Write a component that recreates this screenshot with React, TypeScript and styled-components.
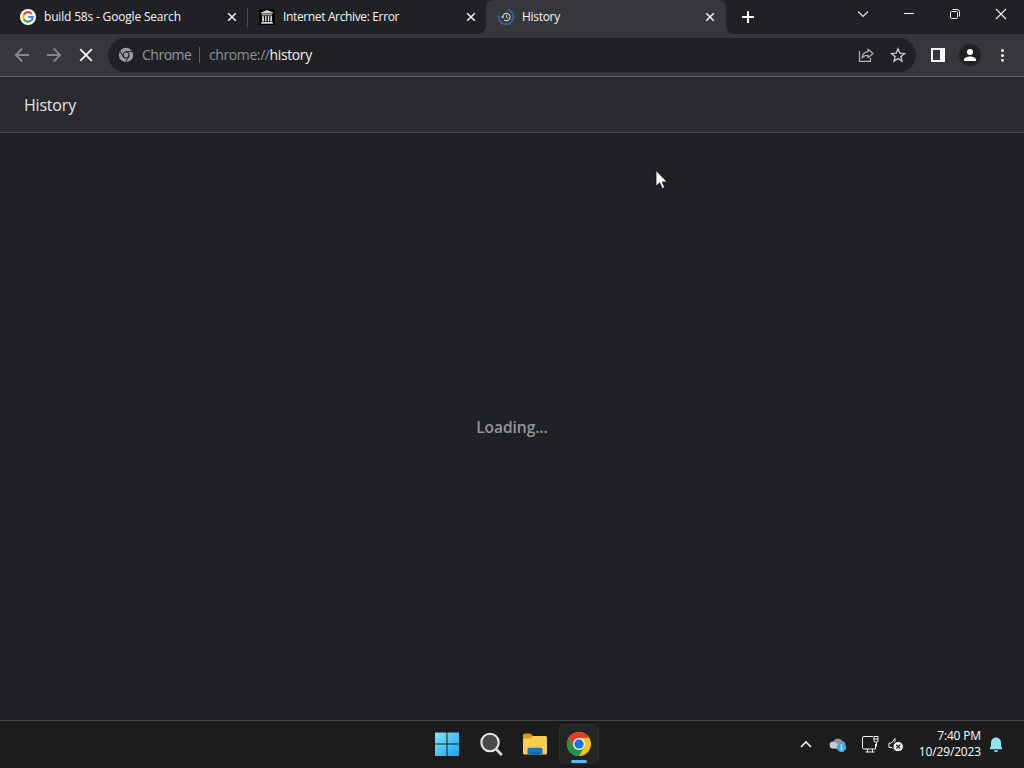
import React from "react";
import styled, { createGlobalStyle } from "styled-components";

const GlobalStyle = createGlobalStyle`
  * {
    box-sizing: border-box;
  }

  body {
    margin: 0;
    overflow: hidden;
    background: #202124;
    font-family: 'Open Sans', 'Noto Sans', sans-serif;
  }

  svg {
    display: block;
    flex: none;
  }
`;

const Screen = styled.div`
  position: relative;
  width: 1024px;
  height: 768px;
  display: flex;
  flex-direction: column;
  background: #202124;
  color: #ffffff;
`;

// Tab strip
const TabStrip = styled.div`
  height: 34px;
  display: flex;
  background: #202124;
`;

const Tab = styled.div<{ $width: number; $pad: number; $active?: boolean }>`
  width: ${(props) => props.$width}px;
  height: 34px;
  display: flex;
  align-items: center;
  padding: 0 ${(props) => (props.$active ? 11 : 10)}px 0 ${(props) => props.$pad}px;
  border-radius: 8px 8px 0 0;
  background: ${(props) => (props.$active ? "#36373a" : "transparent")};
`;

const TabTitle = styled.span<{ $spacing: number }>`
  flex: 1;
  margin-left: 8px;
  font-size: 12px;
  line-height: 16px;
  letter-spacing: ${(props) => props.$spacing}px;
  white-space: nowrap;
  color: #f4f5f6;
`;

const TabDivider = styled.div`
  width: 1px;
  height: 19px;
  margin-top: 8px;
  background: #4b4d51;
`;

const TabCorner = styled.div<{ $side: "left" | "right" }>`
  width: 8px;
  height: 8px;
  margin-left: ${(props) => (props.$side === "left" ? "-8px" : "0")};
  align-self: flex-end;
  background: radial-gradient(
    circle at ${(props) => (props.$side === "left" ? "0 0" : "100% 0")},
    transparent 7.5px,
    #36373a 8px
  );
`;

const NewTab = styled.div`
  padding: 11px 0 0 8px;
`;

const WindowControls = styled.div`
  display: flex;
  margin-left: auto;
`;

const WindowButton = styled.div`
  width: 46px;
  height: 28px;
  display: flex;
  align-items: center;
  justify-content: center;
`;

// Toolbar
const Toolbar = styled.div`
  height: 43px;
  display: flex;
  align-items: center;
  padding: 0 5px 0 6px;
  border-bottom: 1px solid #5e6063;
  background: #36373a;
`;

const ToolButton = styled.div`
  width: 32px;
  height: 32px;
  display: flex;
  align-items: center;
  justify-content: center;
`;

const Omnibox = styled.div`
  width: 808px;
  height: 34px;
  display: flex;
  align-items: center;
  margin: 0 6px;
  padding: 0 2px 0 10px;
  border-radius: 17px;
  background: #202124;
  font-size: 14px;
  line-height: 20px;
`;

const SiteName = styled.span`
  width: 50px;
  margin-left: 8px;
  letter-spacing: -0.5px;
  color: #96999d;
`;

const OmniDivider = styled.div`
  width: 1px;
  height: 16px;
  margin: 0 9px 0 7px;
  background: #5f6165;
`;

const Address = styled.span`
  flex: 1;
  letter-spacing: -0.4px;
  color: #8d9094;

  b {
    font-weight: 400;
    color: #f1f2f3;
  }
`;

const Avatar = styled.div`
  width: 22px;
  height: 22px;
  display: flex;
  align-items: center;
  justify-content: center;
  border-radius: 50%;
  background: #202124;
`;

// Page
const PageHeader = styled.header`
  height: 56px;
  display: flex;
  align-items: center;
  padding-left: 24px;
  border-bottom: 1px solid #434548;
  background: #292a2d;
`;

const PageTitle = styled.h1`
  margin: 0;
  font-size: 16px;
  font-weight: 400;
  line-height: 22px;
  letter-spacing: -0.2px;
  color: #e4e6e9;
`;

const PageBody = styled.main`
  flex: 1;
  display: flex;
  align-items: center;
  justify-content: center;
`;

const Loading = styled.div`
  font-size: 15.5px;
  font-weight: 600;
  line-height: 22px;
  letter-spacing: -0.05px;
  color: #93979b;
`;

// Taskbar
const Taskbar = styled.footer`
  height: 48px;
  display: grid;
  grid-template-columns: 427px 1fr 238px;
  border-top: 1px solid #434445;
  background: #1c1c1c;
`;

const Apps = styled.div`
  grid-column: 2;
  display: flex;
`;

const AppSlot = styled.div<{ $active?: boolean }>`
  width: 40px;
  height: 40px;
  margin: 3px 4px 0 0;
  display: flex;
  flex-direction: column;
  align-items: center;
  padding-top: 7px;
  border-radius: 4px;
  border: 1px solid ${(props) => (props.$active ? "#2a2b2b" : "transparent")};
  background: ${(props) => (props.$active ? "#242525" : "transparent")};
`;

const RunningBar = styled.div`
  width: 16px;
  height: 3px;
  margin-top: 4px;
  border-radius: 2px;
  background: #5cb8f2;
`;

const Tray = styled.div`
  display: flex;
  align-items: center;
  padding-left: 13px;
`;

const TrayIcon = styled.div<{ $gap: number }>`
  margin-left: ${(props) => props.$gap}px;
`;

const Clock = styled.div`
  width: 77px;
  display: flex;
  flex-direction: column;
  align-items: flex-end;
  padding-bottom: 2px;
  font-size: 12px;
  line-height: 16px;
  letter-spacing: -0.15px;
  white-space: nowrap;
`;

const Cursor = styled.svg`
  position: absolute;
  left: 655px;
  top: 169px;
`;

const GoogleIcon = () => (
  <svg width="16" height="16" viewBox="0 0 16 16" fill="none">
    <circle cx="8" cy="8" r="8" fill="#fff" />
    <g strokeWidth="2.2">
      <path d="M11.6 4.7A4.8 4.8 0 0 0 3.8 5.7" stroke="#ea4335" />
      <path d="M3.8 5.7A4.8 4.8 0 0 0 3.8 10.3" stroke="#fbbc05" />
      <path d="M3.8 10.3A4.8 4.8 0 0 0 11 11.7" stroke="#34a853" />
      <path d="M11 11.7A4.8 4.8 0 0 0 12.8 8H8" stroke="#4285f4" />
    </g>
  </svg>
);

const ArchiveIcon = () => (
  <svg width="16" height="16" viewBox="0 0 16 16">
    <path d="M0 0h16v16H0z" fill="#000" />
    <path
      d="M8 1 14 3.5v1H2v-1zM3 5.2h10v1H3zM3.2 6.8h1.6l.3 5.8H3zM6 6.8h1.5v5.8H6zM8.8 6.8h1.5v5.8H8.8zM11.4 6.8H13l.2 5.8h-2zM2.5 13h11v1h-11zM2 14.3h12V15H2z"
      fill="#d4d4d4"
    />
  </svg>
);

const HistoryIcon = () => (
  <svg width="16" height="16" viewBox="0 0 16 16" fill="none" overflow="visible">
    <path d="M9.5.7A7.4 7.4 0 1 1 .7 6.5" stroke="#3b5f9e" strokeWidth="1.8" />
    <path d="M4.7 8A3.7 3.7 0 1 1 6 10.9" stroke="#d4d6d9" strokeWidth="1.1" />
    <path d="M2.8 7.5h3.6L4.6 9.4z" fill="#d4d6d9" />
    <path d="M8.5 5.8v2.4l1.7 1" stroke="#d4d6d9" />
  </svg>
);

const CloseIcon = () => (
  <svg width="10" height="10" viewBox="0 0 10 10">
    <path d="M1.2 1.2 8.8 8.8M8.8 1.2 1.2 8.8" stroke="#eceded" strokeWidth="1.6" />
  </svg>
);

const ChromeGlyph = () => (
  <svg width="16" height="16" viewBox="0 0 24 24">
    <circle cx="12" cy="12" r="10.8" fill="#999ca0" />
    <circle cx="12" cy="12" r="5.3" fill="#202124" />
    <path d="M12 7h10M7.700 14.500 2.700 5.800M16.300 14.500l-5 8.700" stroke="#202124" strokeWidth="1.500" />
    <circle cx="12" cy="12" r="3.600" fill="#999ca0" />
  </svg>
);

const ChromeLogo = () => (
  <svg width="24" height="24" viewBox="0 0 24 24">
    <circle cx="12" cy="12" r="12" fill="#fbc116" />
    <path d="M12 6h10.4A12 12 0 0 0 1.6 6l5.2 9z" fill="#e33b2e" />
    <path d="M6.8 15 1.6 6A12 12 0 0 0 12 24l5.2-9z" fill="#229342" />
    <circle cx="12" cy="12" r="6" fill="#fff" />
    <circle cx="12" cy="12" r="4.7" fill="#1a73e8" />
  </svg>
);

const StartIcon = () => (
  <svg width="24" height="24" viewBox="0 0 24 24">
    <defs>
      <linearGradient id="start" x1="0" y1="0" x2="24" y2="24" gradientUnits="userSpaceOnUse">
        <stop stopColor="#7fe4fb" />
        <stop offset="1" stopColor="#1ba3ee" />
      </linearGradient>
    </defs>
    <path d="M0 .5h11.500v11H0zM12.500 .5H24v11H12.500zM0 12.500h11.500V24H0zM12.500 12.500H24V24H12.500z" fill="url(#start)" />
  </svg>
);

const SearchIcon = () => (
  <svg width="24" height="24" viewBox="0 0 24 24" fill="none">
    <path d="m17.5 17.5 4.5 4.7" stroke="#d8d8d8" strokeWidth="2.8" strokeLinecap="round" />
    <circle cx="11" cy="10.5" r="8.7" fill="#494a4b" stroke="#e4e4e4" strokeWidth="2.1" />
  </svg>
);

const FolderIcon = () => (
  <svg width="26" height="24" viewBox="0 0 26 24">
    <path d="M1 3a1.5 1.5 0 0 1 1.5-1.5h6L11 4v5H1z" fill="#d99a1c" />
    <path d="M1 6.5h7.5L11 4h12.5A1.5 1.5 0 0 1 25 5.5V21a1.5 1.5 0 0 1-1.5 1.5h-21A1.5 1.5 0 0 1 1 21z" fill="#f7cd52" />
    <path d="M5.500 22.500V17.500A1.800 1.800 0 0 1 7.300 15.700h11.400a1.800 1.800 0 0 1 1.800 1.800v5z" fill="#1874bd" />
    <path d="M9 22.500v-2h8v2z" fill="#1262a8" />
  </svg>
);

const App = () => {
  return (
    <>
      <GlobalStyle />
      <Screen>
        <TabStrip>
          <Tab $width={247} $pad={20}>
            <GoogleIcon />
            <TabTitle $spacing={-0.18}>build 58s - Google Search</TabTitle>
            <CloseIcon />
          </Tab>
          <TabDivider />
          <Tab $width={238} $pad={11}>
            <ArchiveIcon />
            <TabTitle $spacing={-0.36}>Internet Archive: Error</TabTitle>
            <CloseIcon />
          </Tab>
          <TabCorner $side="left" />
          <Tab $width={240} $pad={12} $active>
            <HistoryIcon />
            <TabTitle $spacing={-0.3}>History</TabTitle>
            <CloseIcon />
          </Tab>
          <TabCorner $side="right" />
          <NewTab>
            <svg width="12" height="12" viewBox="0 0 12 12">
              <path d="M6 0v12M0 6h12" stroke="#fff" strokeWidth="2" />
            </svg>
          </NewTab>
          <WindowControls>
            <WindowButton>
              <svg width="12" height="8" viewBox="0 0 12 8" fill="none">
                <path d="m1 1.5 5 5 5-5" stroke="#e6e7e8" strokeWidth="1.1" />
              </svg>
            </WindowButton>
            <WindowButton>
              <svg width="10" height="2" viewBox="0 0 10 2">
                <path d="M0 0h10v1H0z" fill="#f5f5f5" />
              </svg>
            </WindowButton>
            <WindowButton>
              <svg width="10" height="10" viewBox="0 0 10 10" fill="none" stroke="#f0f0f0">
                <rect x=".5" y="2.5" width="7" height="7" rx="1.2" />
                <path d="M2.5.5H7A2.5 2.5 0 0 1 9.5 3v4.5" />
              </svg>
            </WindowButton>
            <WindowButton>
              <svg width="12" height="12" viewBox="0 0 12 12">
                <path d="m1 1 10 10M11 1 1 11" stroke="#f5f5f5" strokeWidth="1.1" />
              </svg>
            </WindowButton>
          </WindowControls>
        </TabStrip>

        <Toolbar>
          <ToolButton>
            <svg width="16" height="16" viewBox="0 0 16 16" fill="none">
              <path d="M15 8H2M8.3 1.5 1.8 8l6.5 6.5" stroke="#85878a" strokeWidth="1.8" />
            </svg>
          </ToolButton>
          <ToolButton>
            <svg width="16" height="16" viewBox="0 0 16 16" fill="none">
              <path d="M1 8h13M7.7 1.5 14.2 8l-6.5 6.5" stroke="#85878a" strokeWidth="1.8" />
            </svg>
          </ToolButton>
          <ToolButton>
            <svg width="14" height="14" viewBox="0 0 14 14">
              <path d="m1.2 1.2 11.6 11.6M12.8 1.2 1.2 12.8" stroke="#f1f2f3" strokeWidth="1.9" />
            </svg>
          </ToolButton>
          <Omnibox>
            <ChromeGlyph />
            <SiteName>Chrome</SiteName>
            <OmniDivider />
            <Address>
              chrome://<b>history</b>
            </Address>
            <ToolButton>
              <svg width="16" height="16" viewBox="0 0 16 16" fill="none" stroke="#b4b6b9" strokeWidth="1.2">
                <path d="M1.5 4v10.4h11V11" />
                <path d="M10 2.2 15 6.500l-5 4.200V8.300C7.300 8.200 5.400 9 4 11c.300-3.400 2.400-6 6-6.400z" strokeLinejoin="round" />
              </svg>
            </ToolButton>
            <ToolButton>
              <svg width="16" height="16" viewBox="0 0 16 16" fill="none">
                <path
                  d="m8 1.7 1.8 4.4 4.7.4-3.6 3.1 1.1 4.6L8 11.7l-4 2.5 1.1-4.6-3.6-3.1 4.7-.4z"
                  stroke="#c0c2c5"
                  strokeWidth="1.4"
                />
              </svg>
            </ToolButton>
          </Omnibox>
          <ToolButton>
            <svg width="14" height="14" viewBox="0 0 14 14">
              <path d="M0 0h14v14H0zM2 2v10h7V2z" fill="#f8f9fa" fillRule="evenodd" />
            </svg>
          </ToolButton>
          <ToolButton>
            <Avatar>
              <svg width="12" height="12" viewBox="0 0 12 12" fill="#fff">
                <circle cx="6" cy="3" r="3" />
                <path d="M0 12v-1.5C0 8.500 4 7.500 6 7.500s6 1 6 3V12z" />
              </svg>
            </Avatar>
          </ToolButton>
          <ToolButton>
            <svg width="4" height="14" viewBox="0 0 4 14" fill="#eeeff0">
              <circle cx="2.5" cy="2.5" r="1.5" />
              <circle cx="2.5" cy="7.5" r="1.5" />
              <circle cx="2.5" cy="12.3" r="1.5" />
            </svg>
          </ToolButton>
        </Toolbar>

        <PageHeader>
          <PageTitle>History</PageTitle>
        </PageHeader>
        <PageBody>
          <Loading>Loading...</Loading>
        </PageBody>

        <Taskbar>
          <Apps>
            <AppSlot>
              <StartIcon />
            </AppSlot>
            <AppSlot>
              <SearchIcon />
            </AppSlot>
            <AppSlot>
              <FolderIcon />
            </AppSlot>
            <AppSlot $active>
              <ChromeLogo />
              <RunningBar />
            </AppSlot>
          </Apps>
          <Tray>
            <TrayIcon $gap={0}>
              <svg width="14" height="10" viewBox="0 0 14 10" fill="none">
                <path d="m2 7 5-5 5 5" stroke="#f5f5f5" strokeWidth="1.6" />
              </svg>
            </TrayIcon>
            <TrayIcon $gap={16}>
              <svg width="18" height="16" viewBox="0 0 18 16">
                <path d="M4 11.5a3.500 3.500 0 0 1 .300-7A5 5 0 0 1 13.300 4 3.800 3.800 0 0 1 13 11.500z" fill="#929598" />
                <path d="M4.300 11.500A3.400 3.400 0 0 1 4 4.700c2 0 3 1 7 3.500v3.300z" fill="#c8cacc" />
                <circle cx="12.5" cy="10.5" r="4.7" fill="#38aae6" />
                <path d="M11.800 9.600h1.400v3.600h-1.400zM11.800 7.500h1.400v1.300h-1.400z" fill="#fff" />
              </svg>
            </TrayIcon>
            <TrayIcon $gap={15}>
              <svg width="17" height="17" viewBox="0 0 17 17" fill="none" stroke="#f2f2f2">
                <path d="M11 .5H2A1.500 1.500 0 0 0 .500 2v9.500A1.500 1.500 0 0 0 2 13h11.500V8M5.500 13v3M10.500 13v3M3.500 16h9" />
                <path d="M12 .5h4V5a1 1 0 0 1-1 1h-2a1 1 0 0 1-1-1zM12 3h4M14.500 6v4.500" />
              </svg>
            </TrayIcon>
            <TrayIcon $gap={9}>
              <svg width="16" height="16" viewBox="0 0 16 16" fill="none">
                <path d="M7 1.5v12L4 10.500H1V6h2.500z" stroke="#f2f2f2" strokeLinejoin="round" />
                <circle cx="10.2" cy="9.6" r="5.2" fill="#f2f2f2" stroke="#1c1c1c" />
                <path d="m8.200 7.600 4 4M12.200 7.600l-4 4" stroke="#1c1c1c" strokeWidth="1.3" />
              </svg>
            </TrayIcon>
            <Clock>
              <span>7:40 PM</span>
              <span>10/29/2023</span>
            </Clock>
            <TrayIcon $gap={8}>
              <svg width="14" height="16" viewBox="0 0 14 16" fill="#93e6ee">
                <path d="M7 .5a5 5 0 0 0-5 5V9L.500 12.300h13L12 9V5.500a5 5 0 0 0-5-5zM5 13.200h4a2 2 0 0 1-4 0z" />
              </svg>
            </TrayIcon>
          </Tray>
        </Taskbar>

        <Cursor width="14" height="22" viewBox="0 0 14 22">
          <path d="M1 1.500v15.800l3.700-3.500 2.600 5.800 2.400-1-2.500-5.700h5z" fill="#fff" stroke="#111214" strokeWidth=".8" />
        </Cursor>
      </Screen>
    </>
  );
};

export default App;
